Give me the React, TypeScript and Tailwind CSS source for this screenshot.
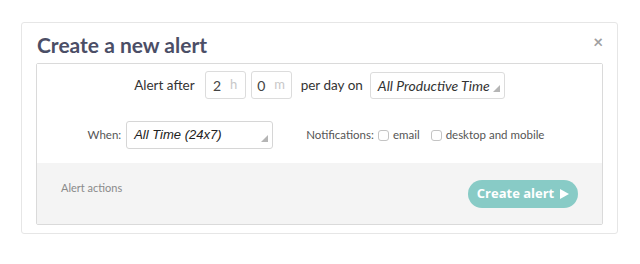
import React from 'react';

const font = { fontFamily: 'Lato, "Open Sans", sans-serif' };

function Corner() {
  return (
    <svg className="absolute right-[4px] bottom-[6px] w-[7px] h-[7px]" viewBox="0 0 7 7">
      <polygon points="7,0 7,7 0,7" fill="#b5b5b5" />
    </svg>
  );
}

function NumberBox({ value, unit }: { value: string; unit: string }) {
  return (
    <div className="w-[41px] h-[28px] border border-[#dcdcdc] rounded-[3px] flex items-center justify-center gap-[9px] text-[14px]">
      <span className="text-[#444]">{value}</span>
      <span className="text-[#c8c8c8] text-[13px]">{unit}</span>
    </div>
  );
}

function Check({ label }: { label: string }) {
  return (
    <label className="flex items-center gap-[4px]">
      <span className="w-[11px] h-[11px] border border-[#c4c4c4] rounded-[3px] bg-white" />
      <span>{label}</span>
    </label>
  );
}

export default function App() {
  return (
    <div className="w-[640px] h-[264px] bg-white pt-[22px] pl-[21px] text-[#3f3f3f]" style={font}>
      <div className="w-[597px] h-[212px] border border-[#e6e6e6] rounded-[3px] px-[14px] pb-[8px] flex flex-col">
        <div className="h-[40px] flex items-center justify-between pl-[1px]">
          <h1 className="text-[21px] font-bold text-[#4b4e66] leading-none mt-[3px]">Create a new alert</h1>
          <span className="text-[#a0a0a0] text-[17px] font-bold mr-[0px] mt-[-2px]">×</span>
        </div>
        <div className="flex-1 border border-[#dadada] rounded-[2px] flex flex-col">
          <div className="bg-white flex flex-col items-center pt-[7px] h-[99px]">
            <div className="flex items-center h-[28px] text-[13.5px] text-[#333]">
              <span className="mr-[10px]">Alert after</span>
              <NumberBox value="2" unit="h" />
              <div className="w-[5px]" />
              <NumberBox value="0" unit="m" />
              <span className="ml-[9px] mr-[7px]">per day on</span>
              <div className="relative w-[135px] h-[27px] border border-[#dcdcdc] rounded-[3px] flex items-center pl-[7px] italic text-[14px] text-[#333]">
                All Productive Time
                <Corner />
              </div>
            </div>
            <div className="flex items-center h-[28px] mt-[22px] text-[11.5px] text-[#555] ml-[-7px]">
              <span className="mr-[5px]">When:</span>
              <div
                className="relative w-[147px] h-[28px] border border-[#d6d6d6] rounded-[3px] flex items-center pl-[7px] italic text-[13px] text-[#222]"
                style={{ fontFamily: '"Liberation Sans", Arial, sans-serif' }}
              >
                All Time (24x7)
                <Corner />
              </div>
              <span className="ml-[33px] mr-[4px]">Notifications:</span>
              <Check label="email" />
              <div className="w-[11px]" />
              <Check label="desktop and mobile" />
            </div>
          </div>
          <div className="flex-1 bg-[#f4f4f4] flex items-start justify-between pl-[24px] pr-[24px]">
            <span className="text-[11px] text-[#8a8a8a] mt-[17px]">Alert actions</span>
            <button
              className="mt-[17px] w-[110px] h-[28px] rounded-full bg-[#88cbc6] text-white text-[13px] font-bold flex items-center justify-center gap-[6px]"
              style={{ fontFamily: '"Open Sans", sans-serif' }}
            >
              Create alert
              <svg width="9" height="10" viewBox="0 0 9 10">
                <polygon points="0,0 9,5 0,10" fill="white" />
              </svg>
            </button>
          </div>
        </div>
      </div>
    </div>
  );
}
